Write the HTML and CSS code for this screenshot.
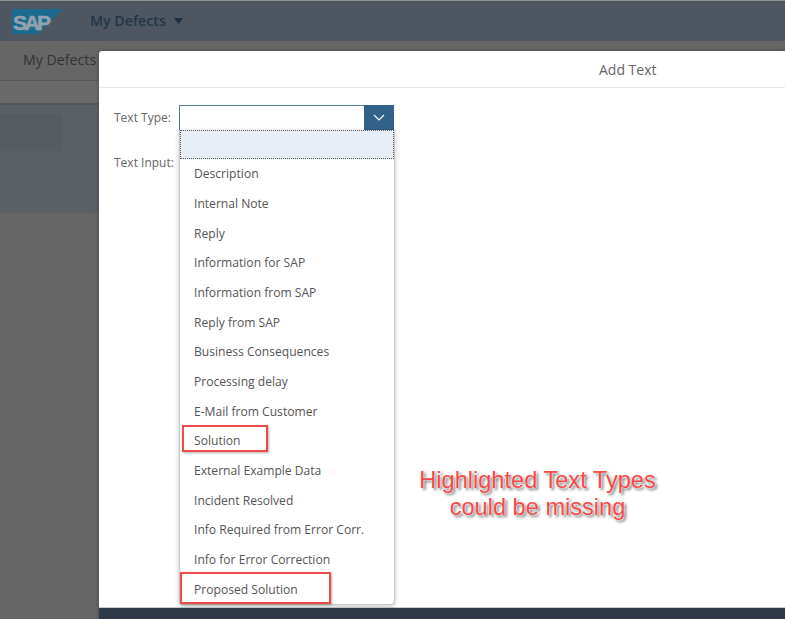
FILE: index.html
```html
<!DOCTYPE html>
<html lang="en">
<head>
<meta charset="utf-8">
<title>My Defects</title>
<link rel="stylesheet" href="styles.css">
</head>
<body>
<div class="page">
  <header class="shell">
    <svg class="logo" width="52" height="26" viewBox="0 0 52 26" aria-label="SAP">
      <polygon points="0,0 51,0 26,25 0,25" fill="#1d6a90"/>
      <text x="1" y="20.5" class="logo-text">SAP</text>
    </svg>
    <span class="shell-title">My Defects</span>
    <svg class="caret" width="9" height="6" viewBox="0 0 9 6"><polygon points="0,0 9,0 4.5,6" fill="#1a3044"/></svg>
  </header>
  <div class="subhead"><span class="subhead-title">My Defects</span></div>
  <div class="toolbar"></div>
  <div class="content">
    <div class="band">
      <div class="band-cell"></div>
    </div>
  </div>
</div>

<section class="dialog">
  <div class="dialog-title">Add Text</div>
  <div class="dialog-body">
    <div class="row">
      <span class="label">Text Type:</span>
      <div class="combo">
        <span class="combo-input"></span>
        <span class="combo-btn">
          <svg width="12" height="7" viewBox="0 0 12 7"><path d="M1 1l5 5 5-5" fill="none" stroke="#fff" stroke-width="1.2"/></svg>
        </span>
      </div>
    </div>
    <div class="row row-input">
      <span class="label">Text Input:</span>
    </div>
  </div>
  <div class="dialog-footer"></div>
</section>

<ul class="list">
  <li class="item item-empty"></li>
  <li class="item">Description</li>
  <li class="item">Internal Note</li>
  <li class="item">Reply</li>
  <li class="item">Information for SAP</li>
  <li class="item">Information from SAP</li>
  <li class="item">Reply from SAP</li>
  <li class="item">Business Consequences</li>
  <li class="item">Processing delay</li>
  <li class="item">E-Mail from Customer</li>
  <li class="item">Solution</li>
  <li class="item">External Example Data</li>
  <li class="item">Incident Resolved</li>
  <li class="item">Info Required from Error Corr.</li>
  <li class="item">Info for Error Correction</li>
  <li class="item">Proposed Solution</li>
</ul>

<div class="mark mark-solution"></div>
<div class="mark mark-proposed"></div>
<div class="note">Highlighted Text Types<br>could be missing</div>
</body>
</html>
```
FILE: styles.css
```css
* { box-sizing: border-box; }
html, body { margin: 0; padding: 0; height: 100%; overflow: hidden; }
body { background: #666; font-family: "Open Sans", "Noto Sans", sans-serif; position: relative; }
.page { height: 619px; display: flex; flex-direction: column; border-top: 1px solid #8f8f8f; }
.shell { height: 40px; background: #4e5661; display: flex; align-items: center; padding-left: 12px; padding-bottom: 2px; }
.logo { margin-top: 4px; }
.logo-text { font: bold 21px "Liberation Sans", sans-serif; fill: #93a2ad; stroke: #93a2ad; stroke-width: .5px; letter-spacing: -2.6px; }
.shell-title { margin-left: 26px; font-size: 14.2px; font-weight: 600; color: #22364a; }
.caret { margin-left: 8px; margin-top: 1px; }
.subhead { height: 40px; background: #666; border-bottom: 1px solid #5a5a5a; padding-left: 23px; line-height: 37px; }
.subhead-title { font-size: 14.2px; color: #333; }
.toolbar { height: 24px; background: #6a6a6a; border-bottom: 2px solid #555; }
.content { background: #666; flex: 1; display: flex; flex-direction: column; }
.band { height: 108px; background: #5a6166; padding-top: 9px; }
.band-cell { width: 62px; height: 37px; background: #565c61; }
.dialog { position: absolute; left: 99px; top: 51px; right: 0; bottom: 0; background: #fff; border-radius: 3px 0 0 0; display: flex; flex-direction: column; box-shadow: 0 0 4px rgba(0,0,0,.3); }
.dialog-title { height: 37px; border-bottom: 1px solid #e5e5e5; font-size: 14px; line-height: 37px; color: #666; padding-left: 500px; }
.dialog-body { flex: 1; padding: 17px 0 0 15px; }
.row { display: flex; align-items: center; height: 25px; }
.row-input { margin-top: 20px; }
.label { width: 65px; font-size: 12px; color: #666; }
.combo { width: 215px; height: 25px; display: flex; border: 1px solid #4f7ca1; border-bottom: 0; background: #fff; }
.combo-input { flex: 1; }
.combo-btn { width: 30px; height: 25px; margin: -1px -1px 0 0; background: #32618a; display: flex; align-items: center; justify-content: center; }
.dialog-footer { height: 12px; background: #2e3a48; border-top: 1px solid #c8cdd3; }
.list { position: absolute; left: 179px; top: 130px; width: 216px; height: 475px; margin: 0; padding: 0; list-style: none; background: #fff; border: 1px solid #c9c9c9; border-top: 0; border-radius: 0 0 4px 4px; box-shadow: 0 1px 4px rgba(0,0,0,.25); }
.item { height: 29.7px; line-height: 30.5px; padding-left: 14px; font-size: 12.1px; color: #555; white-space: nowrap; }
.item-empty { height: 29.2px; background: #e8eef6; outline: 1px dotted #555; outline-offset: -1px; }
.mark { position: absolute; border: 2px solid #f04a4a; box-shadow: 1px 1px 2px rgba(0,0,0,.3); }
.mark-solution { left: 182px; top: 425px; width: 86px; height: 27px; }
.mark-proposed { left: 180px; top: 572px; width: 151px; height: 32px; }
.note { position: absolute; left: 395px; top: 467px; width: 285px; text-align: center; font: 23.6px/27px "Liberation Sans", sans-serif; color: #f54848; text-shadow: 0 0 1px #fff, 0 0 2px #fff, 2px 2px 3px rgba(0,0,0,.6); }
```
